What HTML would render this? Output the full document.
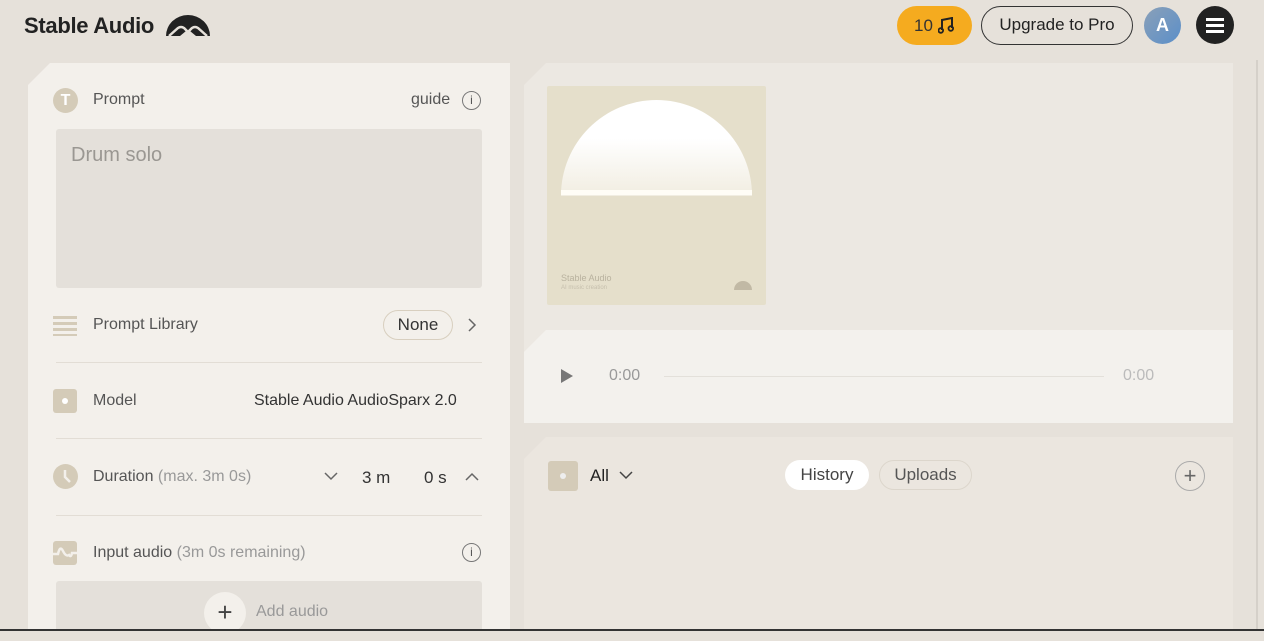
<!DOCTYPE html>
<html><head><style>
*{box-sizing:border-box;margin:0;padding:0}
body{width:1264px;height:631px;overflow:hidden;background:#e6e1da;font-family:"Liberation Sans",sans-serif;position:relative;color:#3a3a3a}
.abs{position:absolute}
.ch{clip-path:polygon(22px 0,100% 0,100% 100%,0 100%,0 22px)}
.lbl{font-size:16px;color:#555}
.ico{width:24px;height:24px;background:#d4cbb8;border-radius:3px}
.sep{position:absolute;left:28px;right:28px;height:1px;background:#e2ddd5}
</style></head><body>
<div class="abs" style="left:24px;top:13px;font-size:22px;font-weight:bold;color:#222;letter-spacing:-0.3px">Stable Audio</div>
<svg class="abs" style="left:166px;top:13px" width="44" height="24" viewBox="0 0 44 24"><path d="M0 23 A22 21 0 0 1 44 23Z" fill="#222"/><path d="M3 23 L12 15 Q15 13 18 15 L22 19 L26 15 Q29 13 32 15 L41 23" fill="none" stroke="#e6e1da" stroke-width="2.5"/><path d="M14 23 L20 18 L22 20 L24 18 L30 23Z" fill="#e6e1da"/></svg>
<div class="abs" style="left:897px;top:6px;width:75px;height:39px;border-radius:20px;background:#f5ab1f;font-size:17px;line-height:39px;color:#333"><span style="position:absolute;left:17px">10</span><svg class="abs" style="left:41px;top:11px" width="16" height="17" viewBox="0 0 16 17"><path d="M4 13V3L14 1V11" fill="none" stroke="#222" stroke-width="2"/><circle cx="2.8" cy="13.5" r="2.3" fill="none" stroke="#222" stroke-width="1.8"/><circle cx="12.8" cy="11.5" r="2.3" fill="none" stroke="#222" stroke-width="1.8"/></svg></div>
<div class="abs" style="left:981px;top:6px;width:152px;height:39px;border-radius:20px;border:1.5px solid #333;font-size:17px;line-height:36px;text-align:center;color:#222">Upgrade to Pro</div>
<div class="abs" style="left:1144px;top:7px;width:37px;height:37px;border-radius:50%;background:linear-gradient(135deg,#8aa0b8,#5b8fc9);color:#fff;font-weight:bold;font-size:18px;line-height:37px;text-align:center">A</div>
<div class="abs" style="left:1196px;top:6px;width:38px;height:38px;border-radius:50%;background:#222"><div style="position:absolute;left:10px;top:12px;width:18px;height:2.5px;background:#fff;box-shadow:0 6px 0 #fff,0 12px 0 #fff"></div></div>
<div class="abs" style="left:1256px;top:60px;width:2px;height:571px;background:#d5d0c9"></div>

<div class="abs ch" style="left:28px;top:63px;width:482px;height:568px;background:#f3f0eb">
  <div class="abs" style="left:25px;top:25px;width:25px;height:25px;border-radius:50%;background:#d4cbb8;color:#fff;font-weight:bold;text-align:center;line-height:25px">T</div>
  <div class="abs lbl" style="left:65px;top:28px">Prompt</div>
  <div class="abs lbl" style="left:383px;top:28px">guide</div>
  <div class="abs" style="left:434px;top:28px;width:19px;height:19px;border:1.5px solid #777;border-radius:50%;font-size:12px;text-align:center;line-height:16px;color:#555">i</div>
  <div class="abs" style="left:28px;top:66px;width:426px;height:159px;background:#e4e0da;border-radius:3px"><div style="padding:15px 15px;font-size:20px;color:#9a9792">Drum solo</div></div>
  <div class="abs" style="left:25px;top:253px;width:24px;height:20px;background:repeating-linear-gradient(#d4cbb8 0 3px,transparent 3px 6px)"></div>
  <div class="abs lbl" style="left:65px;top:253px">Prompt Library</div>
  <div class="abs" style="left:355px;top:247px;width:70px;height:30px;border:1px solid #d8cfbf;border-radius:15px;font-size:17px;text-align:center;line-height:28px;color:#333">None</div>
  <svg class="abs" style="left:439px;top:255px" width="10" height="14" viewBox="0 0 10 14"><path d="M2 1L8 7L2 13" fill="none" stroke="#666" stroke-width="1.5"/></svg>
  <div class="sep" style="top:299px"></div>
  <div class="abs ico" style="left:25px;top:326px"><div style="position:absolute;left:9px;top:9px;width:6px;height:6px;border-radius:50%;background:#fff"></div></div>
  <div class="abs lbl" style="left:65px;top:329px">Model</div>
  <div class="abs" style="left:226px;top:329px;font-size:16px;color:#333">Stable Audio AudioSparx 2.0</div>
  <div class="sep" style="top:375px"></div>
  <svg class="abs" style="left:25px;top:401px" width="25" height="25" viewBox="0 0 25 25"><circle cx="12.5" cy="12.5" r="12.5" fill="#d4cbb8"/><path d="M12 6V13L17 18" fill="none" stroke="#f3f0eb" stroke-width="2.5"/></svg>
  <div class="abs lbl" style="left:65px;top:405px">Duration <span style="color:#999">(max. 3m 0s)</span></div>
  <svg class="abs" style="left:296px;top:409px" width="14" height="9" viewBox="0 0 14 9"><path d="M1 1L7 7L13 1" fill="none" stroke="#666" stroke-width="1.5"/></svg>
  <div class="abs" style="left:334px;top:405px;font-size:17px;color:#333">3 m</div>
  <div class="abs" style="left:396px;top:405px;font-size:17px;color:#333">0 s</div>
  <svg class="abs" style="left:437px;top:409px" width="14" height="9" viewBox="0 0 14 9"><path d="M1 8L7 2L13 8" fill="none" stroke="#666" stroke-width="1.5"/></svg>
  <div class="sep" style="top:452px"></div>
  <svg class="abs" style="left:25px;top:478px" width="24" height="24" viewBox="0 0 24 24"><rect width="24" height="24" rx="3" fill="#d4cbb8"/><path d="M0 13H5Q7 4 10 10T16 14Q18 17 19 12H24" fill="none" stroke="#f3f0eb" stroke-width="2.5"/></svg>
  <div class="abs lbl" style="left:65px;top:481px">Input audio <span style="color:#999">(3m 0s remaining)</span></div>
  <div class="abs" style="left:434px;top:480px;width:19px;height:19px;border:1.5px solid #777;border-radius:50%;font-size:12px;text-align:center;line-height:16px;color:#555">i</div>
  <div class="abs" style="left:28px;top:518px;width:426px;height:60px;background:#e4e0da;border-radius:3px"></div>
  <div class="abs" style="left:176px;top:529px;width:42px;height:42px;border-radius:50%;background:#f3f0eb;text-align:center;font-size:26px;line-height:40px;color:#444">+</div>
  <div class="abs" style="left:228px;top:540px;font-size:16px;color:#999">Add audio</div>
</div>

<div class="abs ch" style="left:524px;top:63px;width:709px;height:360px;background:#ece8e2"></div>
<div class="abs" style="left:547px;top:86px;width:219px;height:219px;background:#e5dfcb;border-radius:2px">
  <div class="abs" style="left:14px;top:14px;width:191px;height:96px;border-radius:96px 96px 0 0;background:linear-gradient(#fff 40%,#f1ede1)"></div>
  <div class="abs" style="left:14px;top:104px;width:191px;height:5px;background:#fffdf6"></div>
  <div class="abs" style="left:14px;top:187px;font-size:9px;color:#b9b29f">Stable Audio</div>
  <div class="abs" style="left:14px;top:199px;font-size:6px;color:#c6bfad">AI music creation</div>
  <div class="abs" style="left:187px;top:195px;width:18px;height:9px;border-radius:9px 9px 0 0;background:#c1b9a5"></div>
</div>
<div class="abs ch" style="left:524px;top:330px;width:709px;height:93px;background:#f3f1ed">
  <div class="abs" style="left:37px;top:39px;width:0;height:0;border-left:12px solid #777;border-top:7px solid transparent;border-bottom:7px solid transparent"></div>
  <div class="abs" style="left:85px;top:37px;font-size:16px;color:#999">0:00</div>
  <div class="abs" style="left:140px;top:46px;width:440px;height:1px;background:#e3e0da"></div>
  <div class="abs" style="left:599px;top:37px;font-size:16px;color:#bbb">0:00</div>
</div>
<div class="abs ch" style="left:524px;top:437px;width:709px;height:194px;background:#ebe6df">
  <div class="abs" style="left:24px;top:24px;width:30px;height:30px;background:#d4cbb8;border-radius:3px"><div style="position:absolute;left:12px;top:12px;width:6px;height:6px;border-radius:50%;background:#eee"></div></div>
  <div class="abs" style="left:66px;top:29px;font-size:17px;color:#222">All</div>
  <svg class="abs" style="left:95px;top:34px" width="14" height="9" viewBox="0 0 14 9"><path d="M1 1L7 7L13 1" fill="none" stroke="#444" stroke-width="1.5"/></svg>
  <div class="abs" style="left:261px;top:23px;width:84px;height:30px;border-radius:15px;background:#fff;font-size:17px;text-align:center;line-height:30px;color:#444">History</div>
  <div class="abs" style="left:355px;top:23px;width:93px;height:30px;border-radius:15px;border:1px solid #dcd6cc;font-size:17px;text-align:center;line-height:28px;color:#555">Uploads</div>
  <div class="abs" style="left:651px;top:24px;width:30px;height:30px;border-radius:50%;border:1px solid #aaa;text-align:center;font-size:22px;line-height:27px;color:#666">+</div>
</div>
<div class="abs" style="left:0;top:629px;width:1264px;height:2px;background:#333"></div>
</body></html>
